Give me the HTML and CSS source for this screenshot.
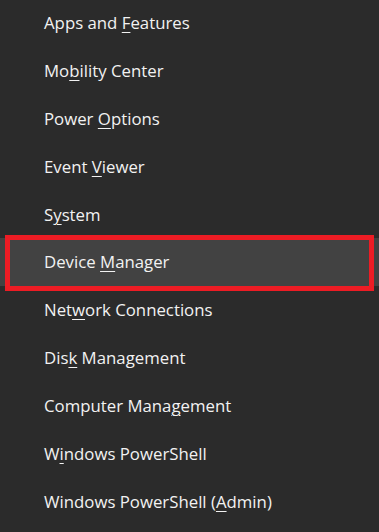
FILE: index.html
```html
<!DOCTYPE html>
<html lang="en">
<head>
    <meta charset="UTF-8">
    <meta name="viewport" content="width=device-width, initial-scale=1.0">
    <title>Quick Link Menu</title>
    <link rel="stylesheet" href="styles.css">
</head>
<body>
    <ul class="menu">
        <li class="menu-item">Apps and <u>F</u>eatures</li>
        <li class="menu-item">Mo<u>b</u>ility Center</li>
        <li class="menu-item">Power <u>O</u>ptions</li>
        <li class="menu-item">Event <u>V</u>iewer</li>
        <li class="menu-item">S<u>y</u>stem</li>
        <li class="menu-item selected">Device <u>M</u>anager</li>
        <li class="menu-item">Net<u>w</u>ork Connections</li>
        <li class="menu-item">Dis<u>k</u> Management</li>
        <li class="menu-item">Computer Mana<u>g</u>ement</li>
        <li class="menu-item">W<u>i</u>ndows PowerShell</li>
        <li class="menu-item">Windows PowerShell (<u>A</u>dmin)</li>
    </ul>
</body>
</html>
```

FILE: styles.css
```css
body {
    margin: 0;
    background-color: #2b2b2b;
    font-family: 'Open Sans', 'Noto Sans', sans-serif;
    color: #f2f2f2;
    overflow: hidden;
}
.menu {
    list-style: none;
    margin: -1px 0 0 0;
    padding: 0;
}
.menu-item {
    height: 48px;
    line-height: 48px;
    padding-left: 44px;
    font-size: 16.8px;
    white-space: nowrap;
}
.menu-item u {
    text-decoration-thickness: 1px;
    text-underline-offset: 3px;
}
.selected {
    position: relative;
    top: -1px;
    margin-bottom: -1px;
    background-color: #424242;
}
.selected::after {
    content: "";
    position: absolute;
    top: -3px;
    bottom: -5px;
    left: 5px;
    right: 5px;
    border: 5px solid #ed1c24;
}
```
